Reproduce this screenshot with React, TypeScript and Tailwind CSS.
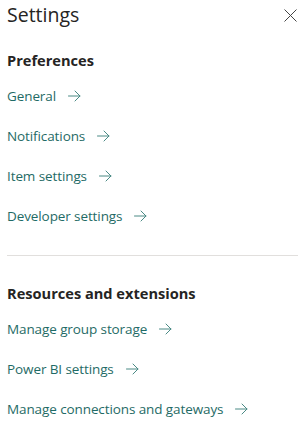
import React from "react";

const Arrow = () => (
  <svg width="13" height="12" viewBox="0 0 13 12" fill="none" className="shrink-0">
    <path d="M0.5 6H12M7 1L12 6L7 11" stroke="#4a8a85" strokeWidth="1" strokeLinecap="round" strokeLinejoin="round" />
  </svg>
);

const LinkRow = ({ label }: { label: string }) => (
  <div className="h-10 flex items-center gap-[12px]">
    <span className="text-[13.5px] tracking-[-0.1px] leading-5 text-[#1f6b66]">{label}</span>
    <Arrow />
  </div>
);

export default function App() {
  return (
    <div
      className="w-[305px] h-[425px] bg-white overflow-hidden px-[7px]"
      style={{ fontFamily: '"Open Sans", "Noto Sans", sans-serif' }}
    >
      <div className="h-[30px] flex items-center justify-between">
        <h1 className="text-[19.5px] leading-[28px] text-[#252423] font-medium">Settings</h1>
        <svg width="13" height="13" viewBox="0 0 13 13" fill="none" className="mr-[1px]">
          <path d="M0.5 0.5L12.5 12.5M12.5 0.5L0.5 12.5" stroke="#444" strokeWidth="1" />
        </svg>
      </div>
      <div className="mt-[14px] h-8 flex items-center">
        <h2 className="text-[14.6px] font-bold text-[#252423] leading-5">Preferences</h2>
      </div>
      <LinkRow label="General" />
      <LinkRow label="Notifications" />
      <LinkRow label="Item settings" />
      <LinkRow label="Developer settings" />
      <div className="mt-[19px] mb-[21px] h-px bg-[#e1dfdd]" />
      <div className="h-8 flex items-center">
        <h2 className="text-[14.6px] font-bold text-[#252423] leading-5">Resources and extensions</h2>
      </div>
      <LinkRow label="Manage group storage" />
      <LinkRow label="Power BI settings" />
      <LinkRow label="Manage connections and gateways" />
    </div>
  );
}
